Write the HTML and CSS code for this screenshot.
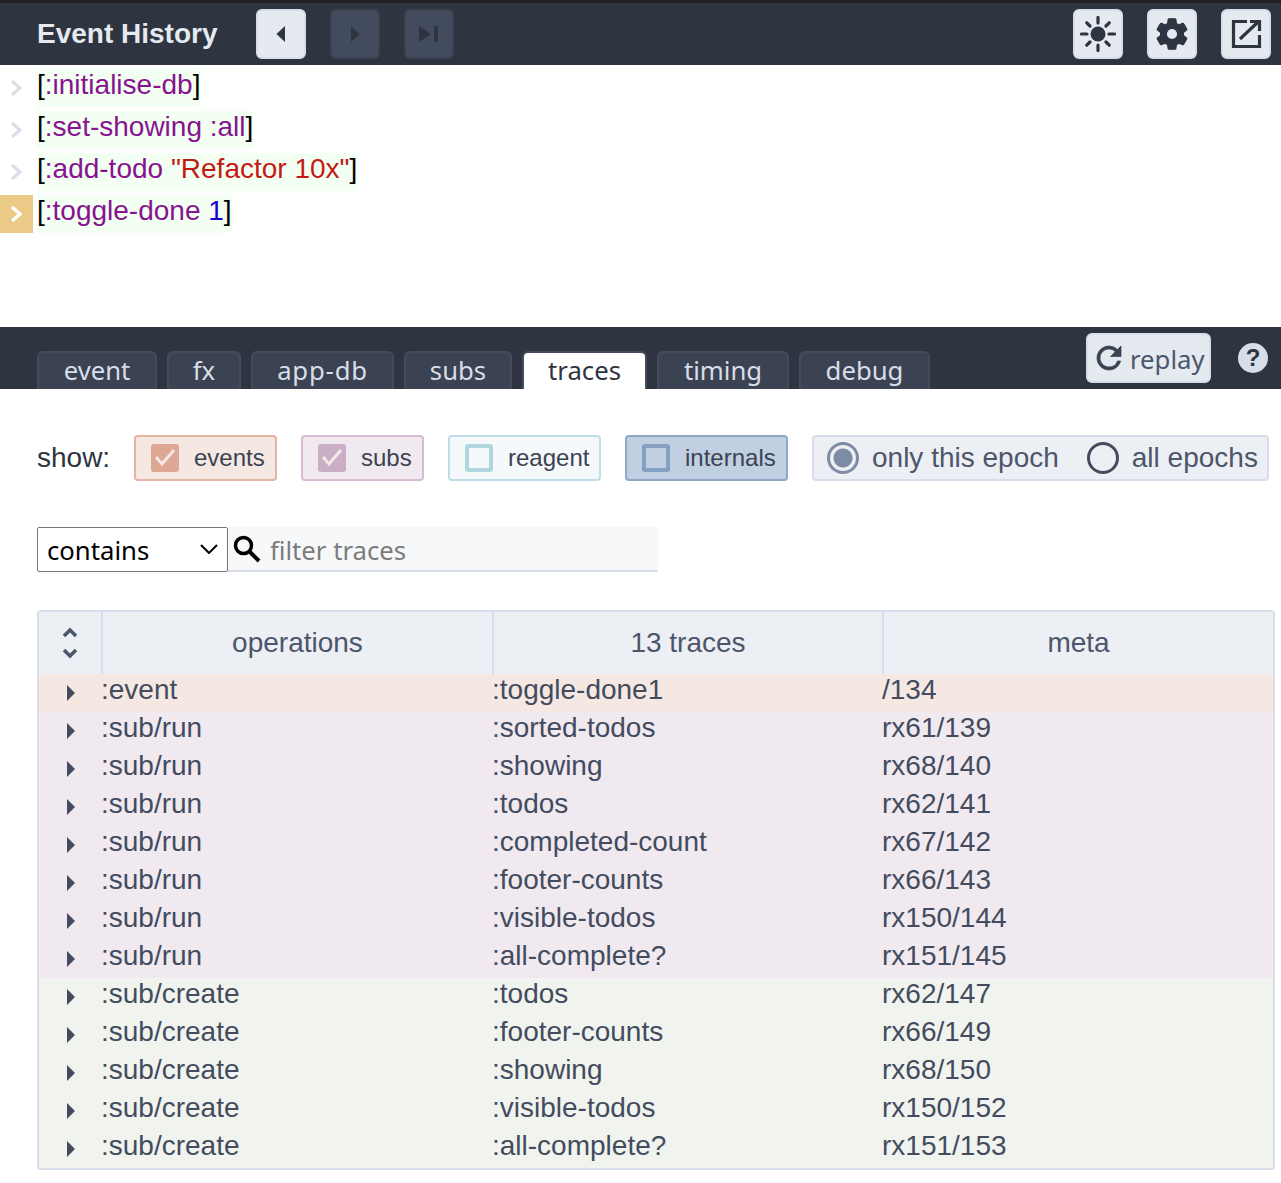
FILE: index.html
```html
<!DOCTYPE html>
<html lang="en">
<head>
<meta charset="utf-8">
<title>Event History</title>
<link rel="stylesheet" href="styles.css">
</head>
<body>
<header class="topbar">
  <h1 class="title">Event History</h1>
  <button class="nav-btn"><svg width="12" height="18" viewBox="0 0 12 18"><path d="M10 1v16L1.500 9z" class="ico-dark"/></svg></button>
  <button class="nav-btn off"><svg width="12" height="18" viewBox="0 0 12 18"><path d="M2 1v16l8.500-8z" class="ico-dark"/></svg></button>
  <button class="nav-btn off"><svg width="24" height="18" viewBox="0 0 24 18"><path d="M2 1v16l12-8z" class="ico-dark"/><rect x="17" y="1" width="4" height="16" class="ico-dark"/></svg></button>
  <div class="top-right">
    <button class="nav-btn"><svg width="36" height="36" viewBox="0 0 36 36"><circle cx="18" cy="18" r="7.500" class="ico-dark"/><path d="M18 1.500V7M18 29v5.500M1.500 18H7M29 18h5.500M6.800 6.800l3.200 3.200M26 26l3.200 3.200M6.800 29.200L10 26M26 10l3.200-3.200" class="ray"/></svg></button>
    <button class="nav-btn"><svg width="38" height="38" viewBox="0 0 24 24"><path class="ico-dark gear" d="M19.140 12.940c.040-.300.060-.610.060-.940 0-.320-.020-.640-.070-.940l2.030-1.580c.180-.140.230-.410.120-.610l-1.920-3.320c-.120-.220-.370-.290-.590-.220l-2.390.960c-.500-.380-1.030-.700-1.620-.940L14.400 2.810c-.040-.240-.240-.410-.480-.410h-3.840c-.240 0-.430.170-.470.410L9.250 5.350c-.590.240-1.130.570-1.620.940L5.240 5.330c-.220-.080-.470 0-.590.220L2.740 8.870c-.120.210-.080.470.120.610l2.030 1.580c-.050.300-.090.630-.090.940s.020.640.070.940l-2.030 1.580c-.180.140-.230.410-.120.610l1.920 3.320c.120.220.370.290.590.220l2.390-.960c.500.380 1.030.700 1.620.940l.360 2.540c.050.240.240.410.480.410h3.840c.240 0 .440-.170.470-.410l.360-2.540c.590-.240 1.130-.560 1.620-.940l2.390.960c.220.080.470 0 .590-.220l1.920-3.320c.120-.220.070-.470-.120-.610l-2.010-1.580zM12 15.600c-1.980 0-3.600-1.620-3.600-3.600s1.620-3.600 3.600-3.600 3.600 1.620 3.600 3.600-1.620 3.600-3.600 3.600z"/></svg></button>
    <button class="nav-btn"><svg width="32" height="32" viewBox="0 0 32 32"><path d="M17 3.500H3.500v25h26V17M20 3.500h9.500V13M10 21L28 4" class="line"/></svg></button>
  </div>
</header>

<section class="history">
  <div class="hist-row"><span class="hist-arrow"><svg width="12" height="18" viewBox="0 0 12 18"><path d="M2 2l8 7-8 7" class="chev"/></svg></span><code class="pill">[<span class="kw">:initialise-db</span>]</code></div>
  <div class="hist-row"><span class="hist-arrow"><svg width="12" height="18" viewBox="0 0 12 18"><path d="M2 2l8 7-8 7" class="chev"/></svg></span><code class="pill">[<span class="kw">:set-showing :all</span>]</code></div>
  <div class="hist-row"><span class="hist-arrow"><svg width="12" height="18" viewBox="0 0 12 18"><path d="M2 2l8 7-8 7" class="chev"/></svg></span><code class="pill">[<span class="kw">:add-todo</span> <span class="str">"Refactor 10x"</span>]</code></div>
  <div class="hist-row"><span class="hist-arrow sel"><svg width="12" height="18" viewBox="0 0 12 18"><path d="M2 2l8 7-8 7" class="chev white"/></svg></span><code class="pill">[<span class="kw">:toggle-done</span> <span class="num">1</span>]</code></div>
</section>

<nav class="tabbar">
  <div class="tabs">
    <a class="tab tab-event">event</a>
    <a class="tab tab-fx">fx</a>
    <a class="tab tab-appdb">app-db</a>
    <a class="tab tab-subs">subs</a>
    <a class="tab tab-traces active">traces</a>
    <a class="tab tab-timing">timing</a>
    <a class="tab tab-debug">debug</a>
  </div>
  <div class="tab-tools">
    <button class="replay"><svg width="36" height="36" viewBox="0 0 24 24"><path class="ico-mid" d="M17.650 6.350A7.960 7.960 0 0 0 12 4C7.580 4 4.010 7.580 4.010 12S7.580 20 12 20c3.730 0 6.840-2.550 7.730-6h-2.080A5.990 5.990 0 0 1 12 18c-3.310 0-6-2.690-6-6s2.690-6 6-6c1.660 0 3.140.690 4.220 1.780L13 11h7V4z"/></svg><span>replay</span></button>
    <span class="help">?</span>
  </div>
</nav>

<section class="filters">
  <span class="show">show:</span>
  <label class="chip ev"><span class="box"><svg width="20" height="20" viewBox="0 0 20 20"><path d="M1 9l6 7L19 2" class="tick"/></svg></span>events</label>
  <label class="chip su"><span class="box"><svg width="20" height="20" viewBox="0 0 20 20"><path d="M1 9l6 7L19 2" class="tick"/></svg></span>subs</label>
  <label class="chip re"><span class="box"></span>reagent</label>
  <label class="chip in"><span class="box"></span>internals</label>
  <div class="radios">
    <label class="radio on"><span class="ring"></span>only this epoch</label>
    <label class="radio"><span class="ring"></span>all epochs</label>
  </div>
</section>

<section class="search">
  <div class="mode-wrap">
    <select class="mode"><option>contains</option></select>
    <svg class="mode-arrow" width="18" height="10" viewBox="0 0 18 10"><path d="M1 1l8 8 8-8" class="mode-chev"/></svg>
  </div>
  <div class="query">
    <svg width="30" height="30" viewBox="0 0 30 30"><circle cx="11.500" cy="11.500" r="8" class="lens"/><path d="M17.500 17.500L27 27" class="lens handle"/></svg>
    <input class="query-input" type="text" placeholder="filter traces">
  </div>
</section>

<section class="traces">
  <div class="thead">
    <div class="th sort"><svg width="16" height="32" viewBox="0 0 16 32"><path d="M2 9l6-6 6 6M2 23l6 6 6-6" class="sort-ico"/></svg></div>
    <div class="th">operations</div>
    <div class="th">13 traces</div>
    <div class="th">meta</div>
  </div>
  <div class="tr t-event"><i class="tw"></i><span>:event</span><span>:toggle-done1</span><span>/134</span></div>
  <div class="tr t-run"><i class="tw"></i><span>:sub/run</span><span>:sorted-todos</span><span>rx61/139</span></div>
  <div class="tr t-run"><i class="tw"></i><span>:sub/run</span><span>:showing</span><span>rx68/140</span></div>
  <div class="tr t-run"><i class="tw"></i><span>:sub/run</span><span>:todos</span><span>rx62/141</span></div>
  <div class="tr t-run"><i class="tw"></i><span>:sub/run</span><span>:completed-count</span><span>rx67/142</span></div>
  <div class="tr t-run"><i class="tw"></i><span>:sub/run</span><span>:footer-counts</span><span>rx66/143</span></div>
  <div class="tr t-run"><i class="tw"></i><span>:sub/run</span><span>:visible-todos</span><span>rx150/144</span></div>
  <div class="tr t-run"><i class="tw"></i><span>:sub/run</span><span>:all-complete?</span><span>rx151/145</span></div>
  <div class="tr t-create"><i class="tw"></i><span>:sub/create</span><span>:todos</span><span>rx62/147</span></div>
  <div class="tr t-create"><i class="tw"></i><span>:sub/create</span><span>:footer-counts</span><span>rx66/149</span></div>
  <div class="tr t-create"><i class="tw"></i><span>:sub/create</span><span>:showing</span><span>rx68/150</span></div>
  <div class="tr t-create"><i class="tw"></i><span>:sub/create</span><span>:visible-todos</span><span>rx150/152</span></div>
  <div class="tr t-create"><i class="tw"></i><span>:sub/create</span><span>:all-complete?</span><span>rx151/153</span></div>
</section>
</body>
</html>
```
FILE: styles.css
```css
* { box-sizing: border-box; }
html, body { margin: 0; padding: 0; background: #fff; }
body { font-family: "Liberation Sans", Arial, sans-serif; font-size: 28px; color: #3b4252; overflow-x: hidden; }
button { font: inherit; padding: 0; cursor: pointer; }

.topbar { height: 65px; background: #2e3440; border-top: 3px solid #222; padding: 6px 10px 0 37px; display: flex; align-items: flex-start; gap: 24px; }
.title { margin: 6px 15px 0 0; font-size: 28px; line-height: 38px; font-weight: 700; color: #e5e9f0; width: 180px; white-space: nowrap; }
.nav-btn { width: 50px; height: 50px; border-radius: 6px; background: #e5e9f0; border: 2px solid #d8dee9; display: flex; align-items: center; justify-content: center; }
.nav-btn.off { background: #434c5e; border-color: #3b4252; }
.nav-btn.off .ico-dark { fill: #2e3440; }
.top-right { margin-left: auto; display: flex; gap: 24px; }
.ico-dark { fill: #2e3440; stroke: #2e3440; stroke-width: 0; }
.ico-dark.gear { stroke-width: .8px; }
.ico-mid { fill: #3b4252; stroke: #3b4252; stroke-width: .5px; }
.ray { fill: none; stroke: #2e3440; stroke-width: 3.200px; stroke-linecap: round; }
.line { fill: none; stroke: #2e3440; stroke-width: 3.200px; }

.history { height: 262px; padding-top: 4px; display: flex; flex-direction: column; gap: 4px; }
.hist-row { display: flex; height: 38px; gap: 4px; }
.hist-arrow { width: 33px; height: 38px; display: flex; align-items: center; justify-content: center; padding-right: 1px; }
.hist-arrow.sel { background: #ebc987; }
.chev { fill: none; stroke: #d8dee9; stroke-width: 3; }
.chev.white { stroke: #fff; stroke-width: 3.500px; }
.pill { font-family: "Liberation Sans", Arial, sans-serif; font-size: 28px; line-height: 32px; height: 38px; background: #f2fff2; border-radius: 4px; color: #000; white-space: pre; }
.kw { color: #881391; }
.str { color: #c41a16; }
.num { color: #1c00cf; }

.tabbar { height: 62px; background: #2e3440; display: flex; align-items: flex-start; padding: 6px 13px 0 37px; }
.tabs { display: flex; gap: 10px; margin-top: 18px; align-items: flex-end; }
.tab { height: 38px; border: 2px solid #434c5e; border-bottom: 0; border-radius: 6px 6px 0 0; background: #3b4252; color: #d8dee9; font-family: "Noto Sans", sans-serif; font-size: 25.700px; line-height: 36px; text-align: center; white-space: nowrap; }
.tab-event { width: 120px; }
.tab-fx { width: 74px; }
.tab-appdb { width: 143px; letter-spacing: .8px; }
.tab-subs { width: 108px; }
.tab-traces { width: 125px; }
.tab-timing { width: 132px; }
.tab-debug { width: 131px; }
.tab.active { background: #fff; color: #2e3440; }
.tab-tools { margin-left: auto; display: flex; align-items: center; gap: 27px; }
.replay { width: 125px; height: 50px; border-radius: 6px; background: #e5e9f0; border: 2px solid #d8dee9; display: flex; align-items: center; gap: 3px; padding-left: 3px; color: #4c566a; font-family: "Noto Sans", sans-serif; font-size: 25.700px; }
.replay span { padding-top: 2px; }
.help { width: 30px; height: 30px; border-radius: 50%; background: #d8dee9; color: #2e3440; font-weight: 700; font-size: 24px; line-height: 30px; text-align: center; }

.filters { display: flex; align-items: center; height: 46px; margin: 46px 12px 0 37px; }
.show { flex: none; width: 97px; color: #2e3440; }
.chip { flex: none; height: 46px; border: 2px solid; border-radius: 4px; display: flex; align-items: center; padding-left: 15px; margin-right: 24px; font-size: 24px; white-space: nowrap; }
.box { width: 28px; height: 28px; border: 4px solid; border-radius: 3px; margin-right: 15px; display: flex; align-items: center; justify-content: center; }
.tick { fill: none; stroke: #f3e8e6; stroke-width: 3; }
.ev { width: 143px; background: #f5e8e3; border-color: #e6b3a2; }
.ev .box { background: #dea794; border-color: #dea794; }
.su { width: 123px; background: #f0e9f0; border-color: #d7bbd2; }
.su .box { background: #c9aec5; border-color: #c9aec5; }
.re { width: 153px; background: #f5f9fb; border-color: #bfdee8; }
.re .box { border-color: #b0d6e0; }
.in { width: 163px; background: #c0cfe1; border-color: #8fa8c6; }
.in .box { border-color: #86a0c3; }
.radios { flex: none; height: 46px; width: 457px; background: #eceff4; border: 2px solid #d8dee9; border-radius: 4px; display: flex; align-items: center; padding-left: 13px; color: #4c566a; }
.radio { display: flex; align-items: center; gap: 13px; margin-right: 28px; white-space: nowrap; }
.ring { width: 32px; height: 32px; border-radius: 50%; border: 3.500px solid #434c5e; }
.radio.on .ring { border-color: #7e8ba4; background: radial-gradient(circle, #7e8ba4 0 9px, transparent 10px); }

.search { display: flex; height: 46px; margin: 46px 0 0 37px; }
.mode-wrap { position: relative; width: 191px; height: 45px; }
.mode { appearance: none; display: block; width: 191px; height: 45px; font-family: "Noto Sans", sans-serif; font-size: 25.700px; padding: 2px 0 0 9px; background: #fff; color: #000; border: 1px solid #767676; border-radius: 2px; }
.mode-arrow { position: absolute; top: 17px; right: 10px; pointer-events: none; }
.mode-chev { fill: none; stroke: #000; stroke-width: 2px; }
.query { width: 430px; height: 45px; background: #f7f8fa; border-bottom: 2px solid #d8dee9; display: flex; align-items: center; padding-left: 4px; gap: 8px; }
.lens { fill: none; stroke: #000; stroke-width: 3.500px; }
.handle { stroke-width: 4px; }
.query-input { flex: 1; min-width: 0; border: 0; background: transparent; font-family: "Noto Sans", sans-serif; font-size: 25.700px; padding: 4px 0 0; outline: 0; color: #2e3440; }
.query-input::placeholder { color: #7b7b7b; opacity: 1; }

.traces { margin: 37px 6px 13px 37px; border: 2px solid #d8dee9; border-radius: 4px; }
.thead, .tr { display: grid; grid-template-columns: 62px 391px 390px 1fr; }
.thead { height: 62px; background: #eceff4; }
.th { border-left: 2px solid #d8dee9; display: flex; align-items: center; justify-content: center; color: #4c566a; }
.th.sort { border-left: 0; padding-right: 1px; }
.sort-ico { fill: none; stroke: #4c566a; stroke-width: 3.500px; }
.tr { height: 38px; line-height: 32px; color: #434c5e; }
.tr > span { white-space: nowrap; }
.t-event { background: #f5e8e3; }
.t-run { background: #f0e9f0; }
.t-create { background: #f1f4ee; }
.tw { display: block; width: 0; height: 0; margin: 11px 0 0 28px; border-left: 8px solid #434c5e; border-top: 8px solid transparent; border-bottom: 8px solid transparent; }
```
